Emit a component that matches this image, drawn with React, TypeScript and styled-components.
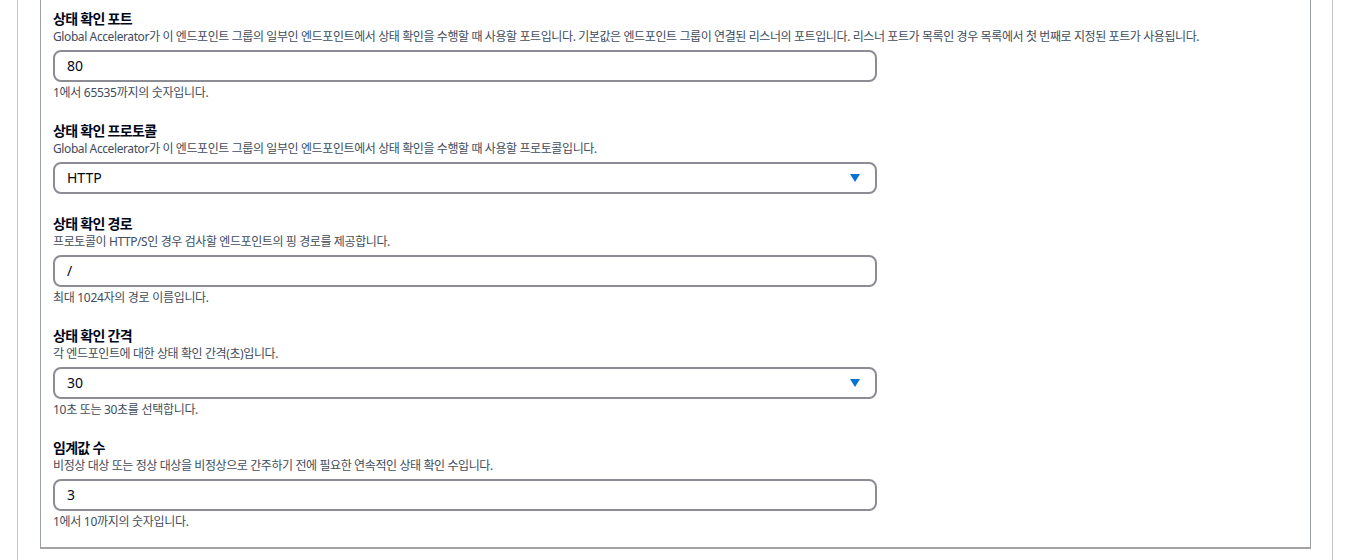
import { createGlobalStyle } from "styled-components";
import styled from "styled-components";

const GlobalStyle = createGlobalStyle`
    html, body {
        margin: 0;
        padding: 0;
        background: #ffffff;
    }
    body {
        font-family: "Noto Sans", "Noto Sans CJK KR", sans-serif;
        color: #000716;
    }
`;

const Page = styled.div`
    margin-left: 17px;
    width: 1316px;
    min-height: 560px;
    border-left: 1px solid #c6c6cd;
    border-right: 1px solid #c6c6cd;
    padding-left: 22px;
    box-sizing: border-box;
`;

const Panel = styled.div`
    width: 1271px;
    box-sizing: border-box;
    border: 1px solid #9ba0a7;
    border-top: none;
    border-bottom: 2px solid #a3a3a3;
    padding: 9px 12px 17px 12px;
    display: flex;
    flex-direction: column;
    gap: 20px;
`;

const Field = styled.div`
    display: flex;
    flex-direction: column;
`;

const Label = styled.div`
    font-size: 14px;
    line-height: 20px;
    font-weight: 700;
    letter-spacing: -0.7px;
    color: #000716;
`;

const Description = styled.div`
    font-size: 12px;
    line-height: 16px;
    letter-spacing: -0.4px;
    color: #414d5c;
    margin-bottom: 5px;
`;

const Constraint = styled.div`
    font-size: 12px;
    line-height: 16px;
    letter-spacing: -0.3px;
    color: #414d5c;
    margin-top: 3px;
`;

const Box = styled.div`
    width: 824px;
    height: 32px;
    box-sizing: border-box;
    border: 2px solid #8c8c94;
    border-radius: 8px;
    padding: 0 10px 1px 12px;
    display: flex;
    align-items: center;
    justify-content: space-between;
    font-size: 14px;
    color: #000716;
`;

const Caret = styled.svg`
    width: 10px;
    height: 8px;
    margin-right: 5px;
    fill: #0972d3;
`;

type FieldData = {
    label: string;
    description: string;
    value: string;
    select?: boolean;
    constraint?: string;
};

const fields: FieldData[] = [
    {
        label: "상태 확인 포트",
        description:
            "Global Accelerator가 이 엔드포인트 그룹의 일부인 엔드포인트에서 상태 확인을 수행할 때 사용할 포트입니다. 기본값은 엔드포인트 그룹이 연결된 리스너의 포트입니다. 리스너 포트가 목록인 경우 목록에서 첫 번째로 지정된 포트가 사용됩니다.",
        value: "80",
        constraint: "1에서 65535까지의 숫자입니다.",
    },
    {
        label: "상태 확인 프로토콜",
        description: "Global Accelerator가 이 엔드포인트 그룹의 일부인 엔드포인트에서 상태 확인을 수행할 때 사용할 프로토콜입니다.",
        value: "HTTP",
        select: true,
    },
    {
        label: "상태 확인 경로",
        description: "프로토콜이 HTTP/S인 경우 검사할 엔드포인트의 핑 경로를 제공합니다.",
        value: "/",
        constraint: "최대 1024자의 경로 이름입니다.",
    },
    {
        label: "상태 확인 간격",
        description: "각 엔드포인트에 대한 상태 확인 간격(초)입니다.",
        value: "30",
        select: true,
        constraint: "10초 또는 30초를 선택합니다.",
    },
    {
        label: "임계값 수",
        description: "비정상 대상 또는 정상 대상을 비정상으로 간주하기 전에 필요한 연속적인 상태 확인 수입니다.",
        value: "3",
        constraint: "1에서 10까지의 숫자입니다.",
    },
];

export default function App() {
    return (
        <>
            <GlobalStyle />
            <Page>
                <Panel>
                    {fields.map((f) => (
                        <Field key={f.label}>
                            <Label>{f.label}</Label>
                            <Description>{f.description}</Description>
                            <Box>
                                <span>{f.value}</span>
                                {f.select && (
                                    <Caret viewBox="0 0 10 8">
                                        <polygon points="0,0 10,0 5,8" />
                                    </Caret>
                                )}
                            </Box>
                            {f.constraint && <Constraint>{f.constraint}</Constraint>}
                        </Field>
                    ))}
                </Panel>
            </Page>
        </>
    );
}
